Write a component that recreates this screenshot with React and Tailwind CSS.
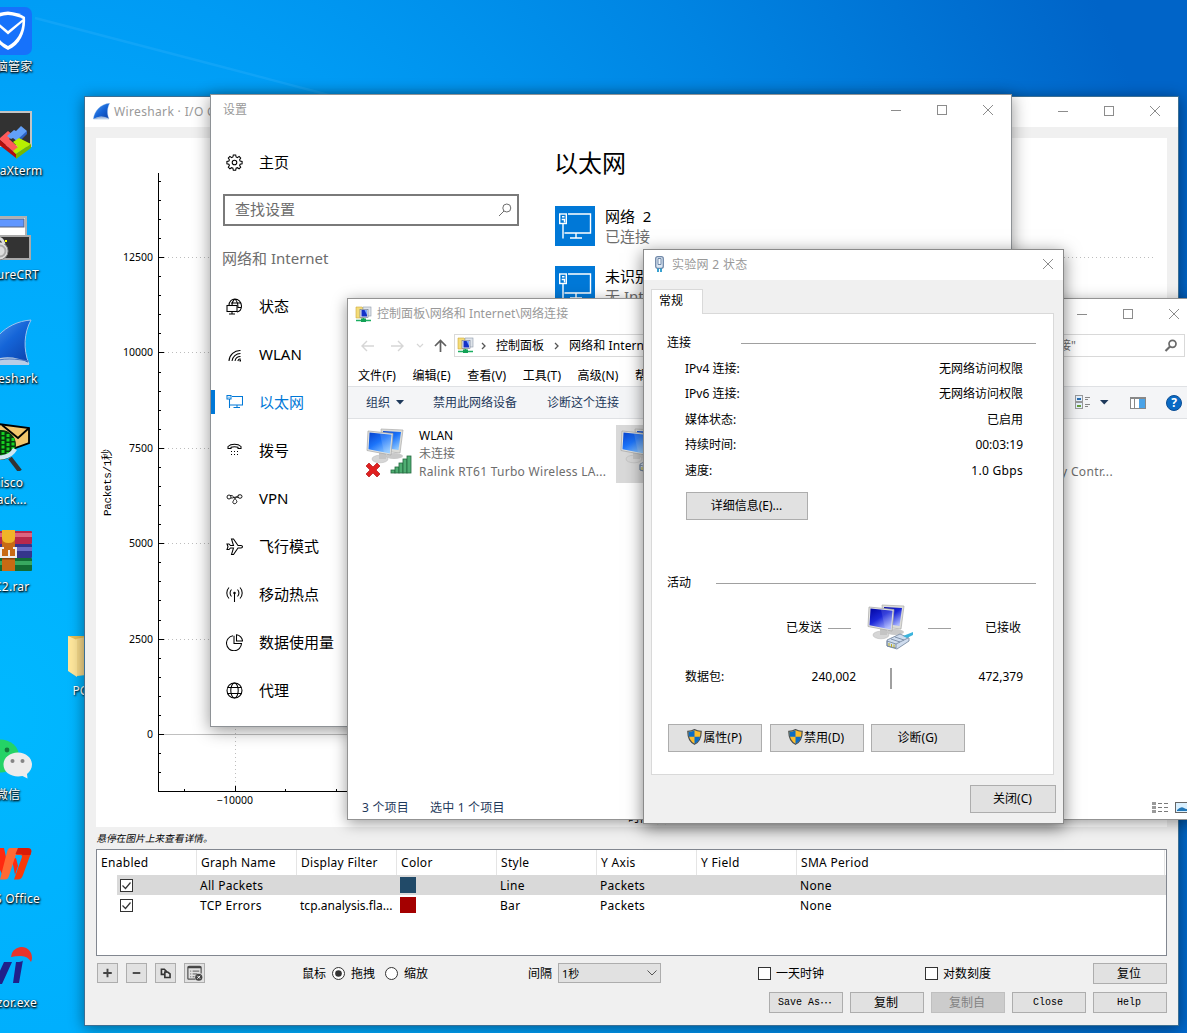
import React from "react";

/* ---------- shared pieces ---------- */

function CaptionButtons({ gap = "gap-[35px]" }) {
  return (
    <div className={`flex items-center text-[#8c8c8c] ${gap}`}>
      <svg width="11" height="11" shapeRendering="crispEdges"><path d="M0 5.5h10" stroke="currentColor" /></svg>
      <svg width="11" height="11" shapeRendering="crispEdges"><rect x=".5" y=".5" width="9" height="9" fill="none" stroke="currentColor" /></svg>
      <CloseGlyph />
    </div>
  );
}

function CloseGlyph() {
  return (
    <svg width="11" height="11" className="text-[#8c8c8c]"><path d="M0 0l10 10M10 0L0 10" stroke="currentColor" strokeWidth="1" /></svg>
  );
}

function Fin({ size }) {
  return (
    <svg width={size} height={size} viewBox="0 0 48 48">
      <defs>
        <linearGradient id="fin" x1="0" y1="0" x2="1" y2="1">
          <stop offset="0" stopColor="#5aa0f0" /><stop offset=".5" stopColor="#1565d8" /><stop offset="1" stopColor="#0a3fa8" />
        </linearGradient>
      </defs>
      <path d="M1 45C4 24 20 3 47 1C40 14 39 30 45 45Z" fill="url(#fin)" stroke="#9cc4ee" strokeWidth="1" />
      <path d="M1 46C14 36 30 36 45 44V46Z" fill="#b9cde6" />
      <path d="M6 44C18 38 32 40 45 42" stroke="#4c78c0" fill="none" />
    </svg>
  );
}

/* ---------- desktop ---------- */

function ShieldLogo() {
  return (
    <svg width="48" height="48" viewBox="0 0 48 48">
      <rect width="48" height="48" rx="7" fill="#1672fb" />
      <path d="M24 4.500C17 5 11 7 7 10C6 24 11 37 24 43C37 37 42 24 41 10C37 7 31 5 24 4.500Z" fill="#fff" />
      <path d="M24 8C18 8.500 13 10 10 12L24 24L39 12C35 10 30 8.500 24 8Z" fill="#1672fb" />
      <path d="M9.500 15C10 26 14 34 24 39C33 34 38 26 38.500 15L24 27.500Z" fill="#1672fb" />
    </svg>
  );
}

function MobaLogo() {
  return (
    <svg width="48" height="48" viewBox="0 0 48 48">
      <rect x="1" y="1" width="46" height="34" fill="#323232" stroke="#c4c4c4" strokeWidth="2" />
      <path d="M15 28L24 20L29 24L25 28L35 37L32 43Z" fill="#ff5a5a" />
      <path d="M15 28L32 43V47L14 33Z" fill="#b40d0d" />
      <path d="M23 25L30 19L32 20L37 15L43 20L41 24L34 31L29 27L27 28Z" fill="#62a0f8" />
      <path d="M43 20V23L34 32V28Z" fill="#2d62c4" />
      <path d="M29 31L35 27L47 33L32 43L29 40L34 36Z" fill="#b8f000" />
      <path d="M47 33V37L32 48V43Z" fill="#78b800" />
    </svg>
  );
}

function CrtLogo() {
  return (
    <svg width="48" height="48" viewBox="0 0 48 48">
      <rect x="1" y="2" width="41" height="28" fill="#fff" stroke="#b0b0b0" strokeWidth="2" />
      <rect x="3" y="4" width="37" height="8" fill="#5f96ff" stroke="#58647e" />
      <rect x="1" y="21" width="45" height="23" fill="#333" stroke="#aaa" strokeWidth="2" />
      <circle cx="15" cy="36" r="9" fill="#ddd" stroke="#888" />
      <circle cx="16" cy="36" r="5.500" fill="none" stroke="#aaa" strokeWidth="2" />
      <path d="M12 23a7 7 0 0 1 8 6" fill="none" stroke="#ddd" strokeWidth="3" />
      <rect x="21" y="25" width="2" height="2" fill="#ff0" />
    </svg>
  );
}

function CiscoLogo() {
  return (
    <svg width="48" height="48" viewBox="0 0 48 48">
      <path d="M6 0L45 5V20L17 30Z" fill="#f3c66d" stroke="#000" strokeWidth="1.800" />
      <path d="M18 2L34 15L45 5" fill="none" stroke="#000" strokeWidth="1.800" />
      <circle cx="17" cy="22" r="15" fill="#063a0c" />
      <path d="M19 9v24M24 11v20M29 15v12M14 9v24" stroke="#16d022" strokeWidth="3" strokeDasharray="3 1.500" />
      <path d="M4 31C14 37 26 35 31 26" fill="none" stroke="#cfe6f2" strokeWidth="4.500" />
      <path d="M26 35L36 48" stroke="#333" strokeWidth="4.500" />
    </svg>
  );
}

function RarLogo() {
  return (
    <svg width="48" height="48" viewBox="0 0 48 48">
      <rect y="4" width="48" height="13" rx="1" fill="#b8284c" /><rect y="6" width="48" height="4" fill="#dc6480" />
      <rect y="17" width="48" height="14" rx="1" fill="#35358c" /><rect y="20" width="48" height="4" fill="#6a6ac4" />
      <rect y="31" width="48" height="13" rx="1" fill="#126c34" /><rect y="34" width="48" height="4" fill="#38a860" />
      <rect x="18" y="3" width="13" height="41" fill="#c86a14" />
      <path d="M18 3h13v8q0 5-6.500 5t-6.500-5Z" fill="#f0b428" />
      <rect x="18" y="31" width="13" height="1.500" fill="#8c4408" />
      <path d="M20 21h-3v9h15v-9h-3M25 23v6" fill="none" stroke="#eee" strokeWidth="2" />
    </svg>
  );
}

function WechatLogo() {
  return (
    <svg width="48" height="48" viewBox="0 0 48 48">
      <ellipse cx="16" cy="21" rx="19" ry="16.500" fill="#24d366" />
      <circle cx="23" cy="15" r="2.400" fill="#127a3c" />
      <path d="M34 17.500c8 0 14 5.500 14 12 0 4-2 7-5 9.500l.5 4.500-5-2.500c-10 2-19-3-19-11.500 0-6.500 6-12 14.500-12Z" fill="#ececec" />
      <circle cx="28.500" cy="26" r="2" fill="#858585" /><circle cx="38.500" cy="26" r="2" fill="#858585" />
    </svg>
  );
}

function WpsLogo() {
  return (
    <svg width="48" height="48" viewBox="0 0 48 48">
      <path d="M6 9h14l3 14-5 12Z" fill="#ff2a10" />
      <path d="M28 20l4-1 2 8-3 9Z" fill="#ff2a10" />
      <path d="M26 9h8L25 37q-1 3.500-4 3.500h-5L23 13q1-4 3-4Z" fill="#ff6a34" />
      <path d="M36 9h7q5.500 0 4 5L39 36q-1.500 4.500-5 4.500h-4L38 18q.5-2-2-2h-4Z" fill="#f83a08" />
      <path d="M34 9h9q5.500 0 4 5l-.5 2h-8q0-1-2-1h-5Z" fill="#d81c08" />
    </svg>
  );
}

function VisorLogo() {
  return (
    <svg width="48" height="48" viewBox="0 0 48 48">
      <path d="M8 19h6l1 11 5-11h8L18 41h-8Z" fill="#20208a" />
      <path d="M32 19q7 0 7-2l-4 23H29Z" fill="#20208a" />
      <path d="M27 14A10.500 10.500 0 0 1 47 10q2 5 0 9-3-6-10-6-6 0-10 1Z" fill="#e8342a" />
    </svg>
  );
}

const shortcuts = [
  { top: "top-[7px]", icon: <ShieldLogo />, label: "电脑管家" },
  { top: "top-[111px]", icon: <MobaLogo />, label: "MobaXterm" },
  { top: "top-[215px]", icon: <CrtLogo />, label: "SecureCRT" },
  { top: "top-[319px]", icon: <Fin size={48} />, label: "Wireshark" },
  { top: "top-[423px]", icon: <CiscoLogo />, label: "Cisco\nPack..." },
  { top: "top-[527px]", icon: <RarLogo />, label: "PC2.rar" },
  { top: "top-[735px]", icon: <WechatLogo />, label: "微信" },
  { top: "top-[839px]", icon: <WpsLogo />, label: "WPS Office" },
  { top: "top-[943px]", icon: <VisorLogo />, label: "Avizor.exe" },
];

function Desktop() {
  return (
    <>
      <svg className="absolute left-0 top-0" width="1187" height="100">
        <path d="M35 18L215 65L340 98" stroke="#4fc0ff" strokeOpacity=".2" strokeWidth="2.500" fill="none" />
      </svg>
      {shortcuts.map((s) => (
        <div key={s.label} className={`absolute -left-[37px] flex w-[90px] flex-col items-center ${s.top}`}>
          {s.icon}
          <span className="mt-[3px] whitespace-pre text-center text-[12px] leading-[17px] tracking-[.25px] text-white [text-shadow:1px_1px_2px_#000,0_1px_2px_#000]">{s.label}</span>
        </div>
      ))}
      <div className="absolute left-[61px] top-[631px] flex w-[48px] flex-col items-center">
        <svg width="48" height="48" viewBox="0 0 48 48">
          <path d="M7 5h34v38H12L7 39Z" fill="#e9bf55" />
          <path d="M15 8l10-2v38l-9 1Z" fill="#f9dc8c" />
          <path d="M7 5l9 4v37l-9-6Z" fill="#ffe79c" />
        </svg>
        <span className="mt-[3px] text-[12px] leading-[17px] text-white [text-shadow:1px_1px_2px_#000]">PC 2</span>
      </div>
    </>
  );
}

/* ---------- Wireshark I/O graph window ---------- */

const yLabels = [["12500", 119], ["10000", 214], ["7500", 310], ["5000", 405], ["2500", 501], ["0", 596]];
const minorTicks = Array.from({ length: 33 }, (_, i) => Math.round(634.2 - i * 19.08)).filter((y) => y > 36);

function Plot() {
  return (
    <svg width="1071" height="689" className="block bg-white" shapeRendering="crispEdges">
      {yLabels.slice(0, 5).map(([l, y]) => (
        <path key={l} d={`M68 ${y + 0.5}H1057`} stroke="#bdbdbd" strokeDasharray="1 3" />
      ))}
      <path d="M63 596.500H1057" stroke="#c0c0c0" />
      <path d="M139.500 35V653" stroke="#bdbdbd" strokeDasharray="1 3" />
      <path d="M62.500 35V653.500H1057" fill="none" stroke="#000" />
      {minorTicks.map((y) => <path key={y} d={`M63 ${y + 0.5}h2`} stroke="#000" />)}
      {yLabels.map(([l, y]) => <path key={l} d={`M63 ${y + 0.5}h5`} stroke="#000" />)}
      <path d="M88.500 651v2M139.500 648v5M189.500 651v2M240.500 651v2" stroke="#000" />
      <g fontFamily="'Noto Sans','Noto Sans CJK SC',sans-serif" fontSize="10.500" fill="#000">
        {yLabels.map(([l, y]) => <text key={l} x="57" y={y + 4} textAnchor="end">{l}</text>)}
        <text x="139" y="666" textAnchor="middle">−10000</text>
      </g>
      <text transform="translate(15 378) rotate(-90)" fontFamily="'Liberation Mono','Noto Sans CJK SC',monospace" fontSize="11" textLength="67">Packets/1秒</text>
      <text x="532" y="684" fontFamily="'Noto Sans CJK SC',sans-serif" fontSize="12">时间 (s)</text>
    </svg>
  );
}

const columns = ["Enabled", "Graph Name", "Display Filter", "Color", "Style", "Y Axis", "Y Field", "SMA Period"];
const graphRows = [
  { name: "All Packets", filter: "", color: "bg-[#214a68]", style: "Line", bg: "bg-[#d9d9d9]" },
  { name: "TCP Errors", filter: "tcp.analysis.fla...", color: "bg-[#a40000]", style: "Bar", bg: "bg-white" },
];
const gridCols = "grid grid-cols-[100px_100px_100px_100px_100px_100px_100px_1fr]";

function GraphTable() {
  return (
    <div className="h-[107px] w-[1071px] border border-[#828790] bg-white text-[12px] tracking-[.3px] text-black">
      <div className={`${gridCols} h-[25px] pr-px`}>
        {columns.map((c) => (
          <div key={c} className="border-r border-[#e5e5e5] pl-[4px] leading-[26px]">{c}</div>
        ))}
      </div>
      {graphRows.map((r) => (
        <div key={r.name} className="flex h-[20px]">
          <div className="w-[20px]" />
          <div className={`flex grow items-center leading-[20px] ${r.bg}`}>
            <div className="flex w-[83px] pl-[3px]">
              <svg width="13" height="13"><rect x=".5" y=".5" width="12" height="12" fill="#fff" stroke="#333" /><path d="M2.500 6.500l3 3L10.500 3.500" fill="none" stroke="#333" strokeWidth="1.200" /></svg>
            </div>
            <div className="w-[100px] pt-[2px]">{r.name}</div>
            <div className="w-[100px] pt-[2px] tracking-[.02px]">{r.filter}</div>
            <div className="w-[100px]"><div className={`h-[16px] w-[16px] ${r.color}`} /></div>
            <div className="w-[100px] pt-[2px]">{r.style}</div>
            <div className="w-[200px] pt-[2px]">Packets</div>
            <div className="pt-[2px]">None</div>
          </div>
        </div>
      ))}
    </div>
  );
}

const toolGlyphs = [
  <path key="a" d="M5 9.500h9M9.500 5v9" stroke="#444" strokeWidth="2" />,
  <path key="b" d="M5.500 9.500h8" stroke="#444" strokeWidth="2" />,
  <g key="c" fill="none" stroke="#333" strokeWidth="1.700"><path d="M8 11H5.200V5.500h3l2 2V9" /><path d="M8.800 8.500h3l2.500 2v3.700H8.800Z" /></g>,
  <g key="d"><path d="M2.500 16V4q0-1.500 1.500-1.500h11q1.500 0 1.500 1.500v6M2.500 16h8" fill="none" stroke="#555" strokeWidth="1.300" /><path d="M2.500 3.500h14" stroke="#444" strokeWidth="2" /><path d="M5 7.500h1M7.500 7.500h7M5 10.500h1M7.500 10.500h5M5 13.500h1M7.500 13.500h2" stroke="#555" /><circle cx="14" cy="14" r="3.800" fill="#444" /><path d="M12.500 12.500l3 3M15.500 12.500l-3 3" stroke="#fff" /></g>,
];

function QtButton({ children, disabled, serif }) {
  const face = disabled ? "border-[#bfbfbf] bg-[#cccccc] text-[#838383]" : "border-[#adadad] bg-[#e1e1e1] text-black";
  const font = serif ? "font-['Liberation_Mono','Noto_Sans_CJK_SC',monospace] text-[10px] pt-px" : "text-[12px]";
  return <div className={`flex h-[21px] w-[74px] items-center justify-center border pr-[2px] leading-none ${face} ${font}`}>{children}</div>;
}

function Radio({ on }) {
  return (
    <svg width="13" height="13"><circle cx="6.500" cy="6.500" r="6" fill="#fff" stroke="#333" />{on && <circle cx="6.500" cy="6.500" r="3.300" fill="#333" />}</svg>
  );
}

function Box() {
  return <div className="-mt-px h-[13px] w-[13px] border border-[#333] bg-white" />;
}

function WiresharkWindow() {
  return (
    <section className="absolute left-[84px] top-[96px] flex h-[930px] w-[1095px] flex-col border border-[#3b6f94] bg-[#f0f0f0] shadow-[0_2px_14px_rgba(0,0,0,.45)]">
      <header className="flex h-[30px] items-center bg-white pb-px pl-[8px] pr-[17px]">
        <Fin size={17} />
        <span className="ml-[4px] grow pt-px text-[12px] tracking-[.35px] text-[#999]">Wireshark · I/O Graphs: 以太网</span>
        <CaptionButtons />
      </header>
      <div className="flex grow flex-col pl-[11px] pr-[11px] pt-[11px]">
        <Plot />
        <div className="mt-[3px] h-[19px] -skew-x-12 pl-px text-[9.700px] leading-[18px] text-black">悬停在图片上来查看详情。</div>
        <GraphTable />
        <div className="mt-[7px] flex h-[21px] items-center text-[12px] leading-none text-black">
          <div className="flex w-[206px] gap-[8px] self-start pl-px">
            {toolGlyphs.map((g, i) => (
              <div key={i} className="h-[20px] w-[21px] border border-[#adadad] bg-[#e1e1e1]"><svg width="19" height="18" viewBox="0 0 19 19">{g}</svg></div>
            ))}
          </div>
          <span className="w-[30px]">鼠标</span><Radio on /><span className="ml-[6px] w-[34px]">拖拽</span><Radio /><span className="ml-[6px] w-[124px]">缩放</span>
          <span className="w-[30px]">间隔</span>
          <div className="flex h-[20px] w-[103px] items-center justify-between self-start border border-[#adadad] bg-[#e1e1e1] pl-[3px] pr-[3px]">
            <span className="text-[11px]">1秒</span>
            <svg width="10" height="6"><path d="M.5.500L5 5L9.500.500" fill="none" stroke="#555" /></svg>
          </div>
          <div className="ml-[97px] flex w-[167px] items-center gap-[5px]"><Box />一天时钟</div>
          <div className="flex grow items-center gap-[5px]"><Box />对数刻度</div>
          <QtButton>复位</QtButton>
        </div>
        <div className="mt-[8px] flex justify-end gap-[7px]">
          <QtButton serif>Save As<span className="font-['Noto_Sans_CJK_SC'] text-[12px]">…</span></QtButton>
          <QtButton>复制</QtButton>
          <QtButton disabled>复制自</QtButton>
          <QtButton serif>Close</QtButton>
          <QtButton serif>Help</QtButton>
        </div>
      </div>
    </section>
  );
}

/* ---------- Settings window ---------- */

const navGlyphs = {
  home: (
    <g><circle cx="8.500" cy="8.500" r="2.300" /><path d="M7.300 1h2.400l.4 2 1.300.6 1.700-1.200 1.600 1.700-1.100 1.700.5 1.300 2 .4v2.300l-2 .4-.5 1.300 1.100 1.700-1.600 1.600-1.700-1.100-1.300.5-.4 2H7.300l-.4-2-1.300-.5-1.700 1.100-1.600-1.600 1.100-1.700-.5-1.300-2-.4V7.500l2-.4.5-1.300-1.100-1.700 1.600-1.700 1.700 1.200 1.300-.6Z" /></g>
  ),
  status: <g><path d="M3 7.500C3 3 6 1 9 1s6.500 2.500 6.500 7c0 3-2 5.500-4.500 6M5 5h10M15 9.500h-3.500M9 1C6 3 6 5 6 7.500M9 1c2.500 2.500 3.200 5 3 9" /><rect x="1" y="7.500" width="10" height="6" /><path d="M6 13.500v2.500M3 16h6" /></g>,
  wlan: <g><path d="M3 15A11 11 0 0 1 14.500 4.500M6 15a8.500 8.500 0 0 1 8.500-7.500M9 15a5.500 5.500 0 0 1 5.500-4.500M11.800 15a3 3 0 0 1 2.700-2.200" /><path d="M13.500 14.500h1.500" strokeWidth="2" /></g>,
  ethernet: <g><path d="M6 2.500h10.500v8.500H3.500" /><path d="M1 1.500h4v3.500H1ZM3.500 5V14M2.500 3.300h1M11 11v2.500M7.500 13.500h6.500" /></g>,
  dial: <g><path d="M2 6.500V4.500C5 1.500 12 1.500 15 4.500v2h-3V5.300c-2-.7-5-.7-7 0v1.200Z" /><path d="M5 9.500h1M8 9.500h1M11 9.500h1M5 12.500h1M8 12.500h1M11 12.500h1" /></g>,
  vpn: <g strokeWidth=".9"><ellipse cx="3" cy="7" rx="2" ry="2" /><ellipse cx="14" cy="6.500" rx="2" ry="1.800" /><path d="M4.300 5.500C7 5 8 7.500 10.500 10.500c1.500 2-2 4.500-3.500 2.500-1-1.800 3-5.500 5.500-8M5 8c2 .5 4-2 7.500-.5" /></g>,
  plane: <path d="M1 6h2l1.500 1.500h3L5.500 1h2l4.500 6.500h3q1.500.2 1.500 1.200T15 10h-3l-4.500 6.500h-2l2-6.500h-3L3 11.500H1l1-2.800Z" />,
  hotspot: <g><path d="M8.500 7v9M3 1.500a8 8 0 0 0 0 11M14 1.500a8 8 0 0 1 0 11M5.500 3.500a5 5 0 0 0 0 7M11.500 3.500a5 5 0 0 1 0 7" /><circle cx="8.500" cy="7" r=".7" /></g>,
  usage: <g><path d="M7 1.800A7.500 7.500 0 1 0 15.500 9.500H8V1.700" /><path d="M10.500.800V7h6A6.500 6.500 0 0 0 10.500.800Z" /></g>,
  proxy: <g><circle cx="8.500" cy="8.500" r="7.500" /><ellipse cx="8.500" cy="8.500" rx="3.700" ry="7.500" /><path d="M1.800 5.500h13.400M1.800 11.500h13.400" /></g>,
};

function NavGlyph({ name }) {
  return <svg width="17" height="17" viewBox="0 0 17 17" fill="none" stroke="currentColor" strokeWidth="1.050">{navGlyphs[name]}</svg>;
}

const navItems = [
  ["status", "状态"], ["wlan", "WLAN"], ["ethernet", "以太网"], ["dial", "拨号"], ["vpn", "VPN"],
  ["plane", "飞行模式"], ["hotspot", "移动热点"], ["usage", "数据使用量"], ["proxy", "代理"],
];

function NetworkTile({ name, state }) {
  return (
    <div className="flex h-[40px] gap-[10px]">
      <div className="h-[40px] w-[40px] bg-[#0078d7]">
        <svg width="40" height="40" fill="none" stroke="#fff" strokeWidth="1.400">
          <path d="M13 8h22.500v19H9.500" /><rect x="4.700" y="8" width="6.600" height="9.500" /><path d="M7 10.700h2.500M6.700 13.500h2.800v3M8 18v14.500M21 27v4.500M15 32h12" />
        </svg>
      </div>
      <div className="text-[15px] leading-[20px] text-black">
        <div className="whitespace-pre">{name}</div>
        <div className="whitespace-pre text-[#6d6d6d]">{state}</div>
      </div>
    </div>
  );
}

function SettingsWindow() {
  return (
    <section className="absolute left-[210px] top-[94px] flex h-[633px] w-[802px] flex-col border border-[#8e9296] bg-white shadow-[0_3px_16px_rgba(0,0,0,.42)]">
      <header className="flex h-[31px] items-center justify-between pl-[12px] pr-[17px]">
        <span className="pb-px text-[12px] leading-none text-[#999]">设置</span>
        <CaptionButtons />
      </header>
      <div className="flex">
        <nav className="w-[344px] text-[15px] text-black">
          <div className="mt-[12px] flex h-[48px] items-center gap-[16px] pl-[15px] leading-[22px]"><NavGlyph name="home" />主页</div>
          <div className="ml-[12px] mt-[8px] flex h-[32px] w-[296px] items-center justify-between border-2 border-[#7a7a7a] pl-[10px] pr-[5px] leading-none text-[#6d6d6d]">
            <span className="pb-[2px]">查找设置</span>
            <svg width="14" height="14" fill="none" stroke="#6d6d6d"><circle cx="8.800" cy="5" r="4" /><path d="M6 8L1 13" /></svg>
          </div>
          <div className="ml-[11px] mt-[22px] h-[20px] leading-[20px] text-[#6d6d6d]">网络和 Internet</div>
          <div className="mt-[14px] flex flex-col">
            {navItems.map(([g, label]) => (
              <div key={g} className={`flex h-[48px] items-center ${g === "ethernet" ? "text-[#0078d7]" : ""}`}>
                <div className={`mr-[11px] h-[24px] w-[4px] ${g === "ethernet" ? "bg-[#0078d7]" : ""}`} />
                <NavGlyph name={g} />
                <span className="ml-[16px]">{label}</span>
              </div>
            ))}
          </div>
        </nav>
        <div className="text-black">
          <h1 className="-ml-px mt-[19px] text-[24px] leading-[36px]">以太网</h1>
          <div className="mt-[25px] flex flex-col gap-[20px]">
            <NetworkTile name={"网络  2"} state="已连接" />
            <NetworkTile name="未识别的网络" state="无 Internet" />
          </div>
        </div>
      </div>
    </section>
  );
}

/* ---------- Network connections explorer ---------- */

function NetFolder() {
  return (
    <svg width="17" height="17" viewBox="0 0 17 17">
      <path d="M1 1h6l1 1v10H1Z" fill="#f4dc78" stroke="#cfa83a" strokeWidth=".6" />
      <rect x="8" y="1" width="8" height="9" fill="#dfe4ea" stroke="#8d98a8" strokeWidth=".6" />
      <rect x="5" y="3.500" width="8" height="8" fill="#e8ecf2" stroke="#68738a" strokeWidth=".6" />
      <rect x="6.500" y="4" width="5.500" height="6.500" fill="#1432c8" /><path d="M9.500 4h2.500v5Z" fill="#7ca8ff" />
      <path d="M1 14.500h15M8.500 12v3" stroke="#1cae62" strokeWidth="1.600" /><rect x="6" y="12.500" width="5" height="3.500" fill="#12a055" />
    </svg>
  );
}

function Monitors({ dark, children }) {
  const id = dark ? "scrDark" : "scrLite";
  return (
    <svg width="46" height="50" viewBox="0 0 46 50">
      <defs>
        <linearGradient id={id} x1="0" y1="0" x2=".7" y2="1">
          <stop offset="0" stopColor={dark ? "#0004a0" : "#0742cc"} /><stop offset=".5" stopColor={dark ? "#1c28d8" : "#1c74fa"} /><stop offset="1" stopColor={dark ? "#aab6ff" : "#8cc6ff"} />
        </linearGradient>
      </defs>
      <ellipse cx="28" cy="28" rx="9" ry="3" fill="#c9c9c9" />
      <path d="M15 1L37 2L34 25L17 23Z" fill="#dcdcd8" stroke="#aaa" strokeWidth=".7" />
      <path d="M17 3L35 4L32.500 22L19 20Z" fill={`url(#${id})`} />
      <ellipse cx="14" cy="31" rx="8" ry="3.800" fill="#d6d6d6" stroke="#b4b4b4" strokeWidth=".5" />
      <path d="M13 25h7v6h-7Z" fill="#c4c4c4" />
      <path d="M2 3L27 5.500L25 27L1 22.500Z" fill="#e4e4e0" stroke="#a4a4a4" strokeWidth=".7" />
      <path d="M3.500 4.500L25.500 6.800L23.800 25.500L2.500 21.300Z" fill={`url(#${id})`} />
      <path d="M14 5.700L25.500 6.800L23.800 25.500L18 24.400Z" fill="#fff" fillOpacity=".12" />
      {children}
    </svg>
  );
}

const plug = (
  <g transform="translate(0 -2)"><path d="M20 38L33 32L42 36V39L30 47L20 44Z" fill="#cfdcee" stroke="#6f8199" strokeWidth=".8" /><path d="M20 39L29 42V46L20 44ZM29 42L41 36M24 37l9 3M28 35l9 3" fill="none" stroke="#6f8199" strokeWidth=".8" /><path d="M22 41v3M24.500 42v3M27 42.500v3" stroke="#c0b020" /><path d="M36 34L46 30V33L40 36Z" fill="#3cb4dc" /></g>
);

function ExplorerWindow() {
  return (
    <section className="absolute left-[347px] top-[298px] flex h-[522px] w-[860px] flex-col border border-[#939393] bg-white text-[12px] text-black shadow-[0_3px_14px_rgba(0,0,0,.4)]">
      <header className="flex h-[30px] items-center pl-[7px] pr-[26px]">
        <NetFolder />
        <span className="ml-[5px] grow tracking-[.05px] text-[#999]">控制面板\网络和 Internet\网络连接</span>
        <CaptionButtons />
      </header>
      <div className="mt-[5px] flex h-[23px] items-center">
        <div className="flex w-[106px] items-center pl-[13px] text-[#d6d6d6]">
          <svg width="13" height="12" fill="none" stroke="currentColor" strokeWidth="1.400"><path d="M13 6H1M6 1L1 6l5 5" /></svg>
          <svg width="13" height="12" className="ml-[17px]" fill="none" stroke="currentColor" strokeWidth="1.400"><path d="M0 6h12M7 1l5 5-5 5" /></svg>
          <svg width="8" height="5" className="ml-[12px]" fill="none" stroke="currentColor" strokeWidth="1.200"><path d="M1 1l3 3 3-3" /></svg>
          <svg width="13" height="14" className="ml-[10px] mt-px" fill="none" stroke="#5f5f5f" strokeWidth="1.700"><path d="M6.500 13V2M1 7l5.500-5.500L12 7" /></svg>
        </div>
        <div className="flex h-[23px] w-[540px] items-center border border-[#d9d9d9] pl-[2px]">
          <NetFolder />
          <svg width="5" height="8" className="ml-[7px] mr-[10px]" fill="none" stroke="#555" strokeWidth="1.300"><path d="M1 1l3 3-3 3" /></svg>
          控制面板
          <svg width="5" height="8" className="ml-[10px] mr-[10px]" fill="none" stroke="#555" strokeWidth="1.300"><path d="M1 1l3 3-3 3" /></svg>
          <span className="tracking-[.1px]">网络和 Internet</span>
        </div>
        <div className="ml-[9px] flex h-[23px] w-[182px] items-center justify-end border border-[#d9d9d9] pr-[6px] text-[#6d6d6d]">
          <span className="mr-[88px] shrink-0 whitespace-nowrap">搜索"网络连接"</span>
          <svg width="14" height="13" className="shrink-0" fill="none" stroke="#6a6a6a"><circle cx="8.500" cy="4.800" r="3.500" strokeWidth="1.700" /><path d="M6 7.500L1.500 12" strokeWidth="2.200" /></svg>
        </div>
      </div>
      <div className="flex h-[29px] items-center gap-[16.500px] pl-[10px] pt-[8px]">
        {["文件(F)", "编辑(E)", "查看(V)", "工具(T)", "高级(N)", "帮助(H)"].map((m) => <span key={m} className="tracking-[.1px]">{m}</span>)}
      </div>
      <div className="flex h-[33px] items-center border-y border-[#dfe1e4] bg-[#f4f5f7] pl-[18px] text-[#1e395b]">
        组织
        <svg width="8" height="5" className="ml-[6px] mr-[29px]"><path d="M0 0h8L4 4.500Z" fill="#1e395b" /></svg>
        <span className="mr-[30px]">禁用此网络设备</span>
        <span className="grow">诊断这个连接</span>
        <div className="flex w-[131px] items-center">
          <svg width="16" height="15" shapeRendering="crispEdges"><rect x=".5" y=".5" width="7" height="6" fill="#e6f2ff" stroke="#9a9a9a" /><rect x=".5" y="7.500" width="7" height="6" fill="#e6f2ff" stroke="#9a9a9a" /><path d="M2 3h4v2h-4Z" fill="#2b6fb0" /><path d="M2 10h4v2h-4Z" fill="#6aa03c" /><path d="M10 2.500h5M10 4.500h3M10 9.500h5M10 11.500h3" stroke="#888" /></svg>
          <svg width="9" height="5" className="ml-[9px]"><path d="M0 0h8.500L4.250 4.500Z" fill="#1e395b" /></svg>
          <svg width="16" height="12" className="ml-[21px]" shapeRendering="crispEdges"><rect x=".5" y=".5" width="15" height="11" fill="#fff" stroke="#888" /><path d="M0 1h16M4.500 1v11" stroke="#888" /><rect x="9" y="2" width="6" height="9" fill="#4aa3e8" /></svg>
          <div className="ml-[20px] flex h-[16px] w-[16px] items-center justify-center rounded-full border border-[#0b4d94] bg-[#0a6ac4] text-[12px] font-bold leading-none text-white">?</div>
        </div>
      </div>
      <div className="flex grow pt-[6px]">
        <div className="flex w-[268px] pl-[18px] pt-[3px]">
          <Monitors>
            <path d="M0 38L3 35L7 39L11 35L14 38L10 42L14 46L11 49L7 45L3 49L0 46L4 42Z" fill="#e02020" stroke="#a80000" strokeWidth=".6" />
            <g transform="translate(0 1)" fill="#4fae72" stroke="#24683f" strokeWidth=".8"><rect x="25" y="41" width="4" height="3" /><rect x="29" y="38" width="4" height="6" /><rect x="33" y="34" width="4" height="10" /><rect x="37" y="30" width="4" height="14" /><rect x="41" y="27" width="4" height="17" /></g>
          </Monitors>
          <div className="-mt-px ml-[7px] whitespace-nowrap leading-[18px] text-[#6d6d6d]">
            <div className="text-black">WLAN</div>
            <div>未连接</div>
            <div className="tracking-[.28px]">Ralink RT61 Turbo Wireless LA...</div>
          </div>
        </div>
        <div className="h-[58px] w-[446px] bg-[linear-gradient(90deg,#d9d9d9_200px,transparent_200px)] pl-[4px] pt-[3px]"><Monitors>{plug}</Monitors></div>
        <div className="-ml-[200px] w-[251px] whitespace-nowrap pt-[38px] text-right leading-[18px] tracking-[.35px] text-[#6d6d6d]">Realtek PCIe GbE Family Contr...</div>
      </div>
      <footer className="flex h-[24px] items-center pl-[14px] pt-px text-[#1e395b]">
        <span className="w-[68px] tracking-[.2px]">3 个项目</span>
        <span className="grow tracking-[.2px]">选中 1 个项目</span>
        <svg width="16" height="12" className="mr-[7px]" fill="none" shapeRendering="crispEdges"><path d="M0 1.500h4M0 5.500h4M0 9.500h4" stroke="#9a9a9a" strokeWidth="3" /><path d="M6 1.500h4M6 5.500h4M6 9.500h4M12 1.500h4M12 5.500h4M12 9.500h4" stroke="#7a7a7a" /></svg>
        <svg width="16" height="12" className="mr-[15px]"><rect x=".5" y=".5" width="15" height="10" fill="#d9f0ff" stroke="#666" /><path d="M2 8q4-4 7-2t5 0v3H2Z" fill="#2277b8" /></svg>
      </footer>
    </section>
  );
}

/* ---------- Adapter status dialog ---------- */

function UacShield() {
  return (
    <svg width="15" height="16" viewBox="0 0 15 16" className="-mt-px">
      <path d="M7.500.500C5.500 1.800 3 2.200.8 2.300c0 6 1.500 10.500 6.700 13 5.200-2.500 6.700-7 6.700-13-2.200-.1-4.700-.5-6.700-1.800Z" fill="#fbbc2c" stroke="#4a4f54" strokeWidth="1.200" />
      <path d="M7.500 1.300C5.500 2.500 3.300 2.900 1.500 3c0 1.600.1 3.200.5 4.700h5.500ZM7.500 7.700h5.600c-.8 3.300-2.500 5.500-5.600 7Z" fill="#0c6cc4" />
    </svg>
  );
}

function WinButton({ children, w = "w-[94px]", h = "h-[28px]" }) {
  return <div className={`flex items-center justify-center border border-[#adadad] bg-[#e1e1e1] pr-px leading-none ${h} ${w}`}>{children}</div>;
}

const connectionRows = [
  ["IPv4 连接:", "无网络访问权限"], ["IPv6 连接:", "无网络访问权限"], ["媒体状态:", "已启用"], ["持续时间:", "00:03:19"], ["速度:", "1.0 Gbps", "tracking-[.3px]"],
];

function StatusDialog() {
  return (
    <section className="absolute left-[643px] top-[249px] flex h-[575px] w-[421px] flex-col border border-[#8a8a8a] bg-[#f0f0f0] text-[12px] text-black shadow-[0_4px_16px_rgba(0,0,0,.5)]">
      <header className="flex h-[30px] items-center bg-white pb-px pl-[11px] pr-[9px]">
        <svg width="9" height="17" viewBox="0 0 9 17"><rect x=".7" y=".7" width="7.600" height="11.600" rx="2" fill="#dbe6f2" stroke="#7088a8" strokeWidth="1.300" /><path d="M3 2.500v6h3v-6Z" fill="#f4f8fc" stroke="#7088a8" /><path d="M3 12.500V16M6 12.500V16" stroke="#1892c8" strokeWidth="1.700" /></svg>
        <span className="ml-[8px] grow pt-px tracking-[.3px] text-[#999]">实验网 2 状态</span>
        <CloseGlyph />
      </header>
      <div className="px-[7px] pt-[9px]">
        <div className="relative z-10 -mb-px h-[25px] w-[52px] border border-b-0 border-[#d9d9d9] bg-white pl-[7px] leading-[22px]">常规</div>
        <div className="h-[462px] w-[403px] border border-[#d9d9d9] bg-white pl-[15px] pr-[17px] pt-[16px]">
          <div className="flex h-[26px] items-center"><span className="w-[74px]">连接</span><div className="mt-px h-px grow bg-[#a0a0a0]" /></div>
          {connectionRows.map(([k, v, t = ""]) => (
            <div key={k} className="flex h-[25.500px] items-center justify-between pl-[18px] pr-[13px]"><span>{k}</span><span className={t}>{v}</span></div>
          ))}
          <div className="ml-[19px] mt-[8px]"><WinButton w="w-[122px]">详细信息(E)...</WinButton></div>
          <div className="mt-[50px] flex h-[26px] items-center"><span className="w-[49px]">活动</span><div className="mt-px h-px grow bg-[#a0a0a0]" /></div>
          <div className="flex h-[64px] items-center pl-[119px]">
            <span className="w-[42px]">已发送</span><div className="mt-px h-px w-[23px] bg-[#a0a0a0]" />
            <div className="ml-[16px] mt-[2px] w-[46px]"><Monitors dark>{plug}</Monitors></div>
            <div className="ml-[15px] mt-px h-px w-[23px] bg-[#a0a0a0]" /><span className="ml-[34px]">已接收</span>
          </div>
          <div className="flex h-[34px] items-center pl-[18px] pr-[13px]">
            <span className="w-[111px]">数据包:</span><span className="w-[60px] text-right">240,002</span><div className="ml-[34px] mt-[4px] h-[21px] w-[2px] bg-[#a0a0a0]" /><span className="grow text-right">472,379</span>
          </div>
          <div className="ml-px mt-[30px] flex gap-[7.500px]">
            <WinButton><UacShield />&#8202;属性(P)</WinButton>
            <WinButton><UacShield />&#8202;禁用(D)</WinButton>
            <WinButton>诊断(G)</WinButton>
          </div>
        </div>
        <div className="mt-[10px] flex justify-end"><WinButton w="w-[86px]">关闭(C)</WinButton></div>
      </div>
    </section>
  );
}

export default function App() {
  return (
    <main className="relative h-[1033px] w-[1187px] overflow-hidden bg-[radial-gradient(ellipse_1250px_1500px_at_0px_720px,#00b8ff_0%,#00a9fc_35%,#009bf4_50%,#0084e2_72%,#0064c8_100%)] font-['Noto_Sans','Noto_Sans_CJK_SC',sans-serif]">
      <Desktop />
      <WiresharkWindow />
      <SettingsWindow />
      <ExplorerWindow />
      <StatusDialog />
    </main>
  );
}
